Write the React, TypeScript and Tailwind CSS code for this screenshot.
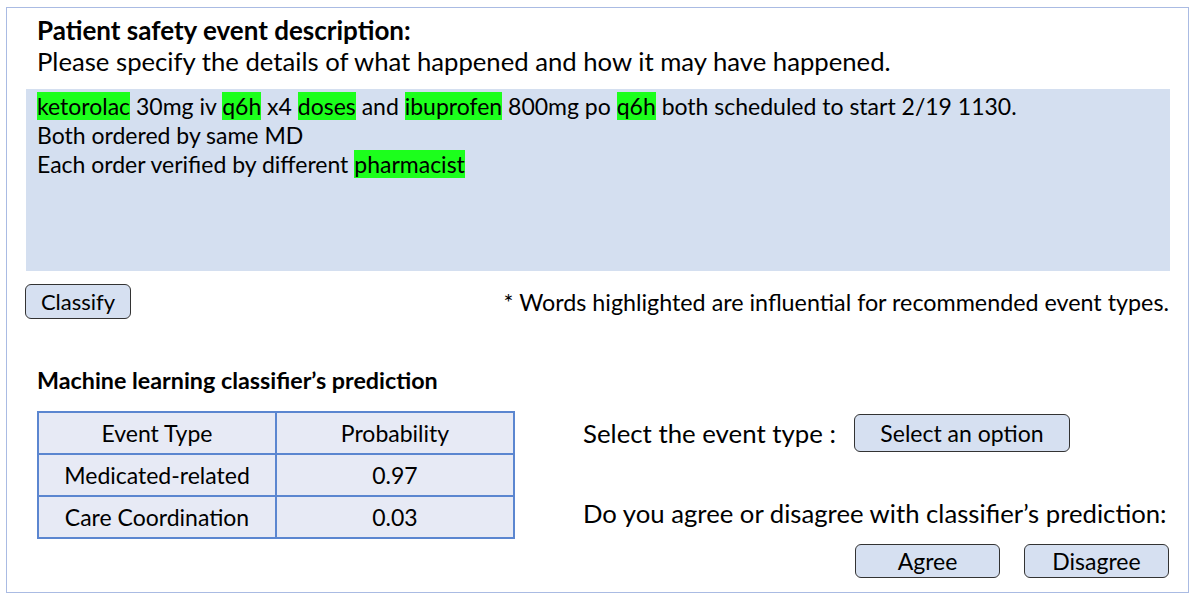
import React from "react";

const H = ({ children }: { children: React.ReactNode }) => (
  <span className="bg-[#1cff1c]">{children}</span>
);

const cell = "h-[42px] border-r-2 border-b-2 border-[#5b86d0] flex items-center justify-center";

export default function App() {
  return (
    <div className="w-[1200px] h-[600px] bg-white pt-[7px] pl-[6px] text-black" style={{ fontFamily: "Lato, 'Open Sans', sans-serif" }}>
      <div className="w-[1183px] h-[586px] border border-[#aabbe3] flex flex-col overflow-hidden">
        <div className="shrink-0 pl-[30px] pt-[8px]">
          <div className="text-[26px] font-bold leading-[28px]">Patient safety event description:</div>
          <div className="mt-[3px] text-[25.7px] leading-[28px]">Please specify the details of what happened and how it may have happened.</div>
        </div>
        <div className="shrink-0 ml-[19px] mt-[14px] w-[1144px] h-[182px] bg-[#d4dff0] pl-[11px] pt-[3px] text-[23px] leading-[29px]">
          <div>
            <H>ketorolac</H> 30mg iv <H>q6h</H> x4 <H>doses</H> and <H>ibuprofen</H> 800mg po <H>q6h</H> both scheduled to start 2/19 1130.
          </div>
          <div>Both ordered by same MD</div>
          <div>
            Each order verified by different <H>pharmacist</H>
          </div>
        </div>
        <div className="shrink-0 ml-[18px] mr-[19px] mt-[13px] flex items-center justify-between">
          <button className="w-[106px] h-[35px] bg-[#d6e0f1] border border-[#333] rounded-[6px] text-[22px] leading-none">Classify</button>
          <div className="text-[23.3px] leading-[30px] whitespace-nowrap">* Words highlighted are influential for recommended event types.</div>
        </div>
        <div className="shrink-0 flex items-start mt-[48px]">
          <div className="pl-[30px]">
            <div className="text-[23.3px] font-bold leading-[26px] whitespace-nowrap">Machine learning classifier’s prediction</div>
            <div className="mt-[18px] grid grid-cols-[238px_238px] border-l-2 border-t-2 border-[#5b86d0] bg-[#e7eaf5] text-[23px] leading-none">
              <div className={cell}>Event Type</div>
              <div className={cell}>Probability</div>
              <div className={cell}>Medicated-related</div>
              <div className={cell}>0.97</div>
              <div className={cell}>Care Coordination</div>
              <div className={cell}>0.03</div>
            </div>
          </div>
          <div className="ml-[68px] w-[586px] pt-[47px]">
            <div className="flex items-center">
              <span className="text-[25.8px] leading-[30px] whitespace-nowrap">Select the event type :</span>
              <button className="ml-[18px] w-[216px] h-[38px] bg-[#d6e0f1] border border-[#333] rounded-[6px] text-[23px] leading-none">Select an option</button>
            </div>
            <div className="mt-[46px] text-[25.7px] leading-[30px] whitespace-nowrap">Do you agree or disagree with classifier’s prediction:</div>
            <div className="flex justify-end gap-[24px] mt-[16px]">
              <button className="w-[145px] h-[34px] bg-[#d6e0f1] border border-[#333] rounded-[6px] text-[23px] leading-none">Agree</button>
              <button className="w-[145px] h-[34px] bg-[#d6e0f1] border border-[#333] rounded-[6px] text-[23px] leading-none">Disagree</button>
            </div>
          </div>
        </div>
      </div>
    </div>
  );
}
